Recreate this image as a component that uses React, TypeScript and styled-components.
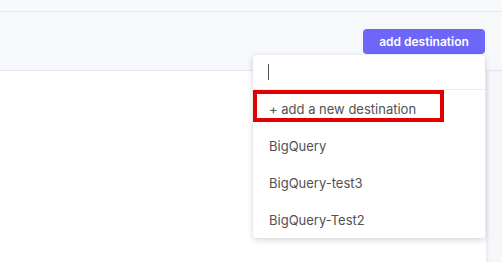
import styled, { createGlobalStyle } from "styled-components";

const GlobalStyle = createGlobalStyle`
  html, body {
    margin: 0;
    padding: 0;
    background: #f7f8fc;
    font-family: Inter, "Noto Sans", sans-serif;
  }
`;

const Page = styled.div`
  width: 502px;
  height: 262px;
  overflow: hidden;
  display: flex;
  flex-direction: column;
`;

const TopBar = styled.div`
  height: 11px;
  flex: none;
  border-bottom: 1px solid #e7e8ee;
`;

const Header = styled.div`
  height: 59px;
  flex: none;
  display: flex;
  justify-content: flex-end;
  align-items: flex-start;
  padding: 17px 17px 0 0;
  box-sizing: border-box;
  border-bottom: 1px solid #e6e7ee;
  position: relative;
  z-index: 2;
`;

const ButtonWrap = styled.div`
  position: relative;
`;

const AddButton = styled.button`
  height: 25px;
  width: 122px;
  padding: 0;
  border: none;
  border-radius: 4px;
  background: #6e66f9;
  color: #fff;
  font-family: Inter, sans-serif;
  font-size: 12px;
  font-weight: 600;
  cursor: pointer;
`;

const Dropdown = styled.div`
  position: absolute;
  top: 26px;
  right: 0;
  width: 232px;
  background: #fff;
  border-radius: 3px;
  box-shadow: 0 2px 6px rgba(0, 0, 0, 0.16), 0 0 1px rgba(0, 0, 0, 0.12);
`;

const SearchRow = styled.div`
  height: 35px;
  box-sizing: border-box;
  border-bottom: 1px solid #ececef;
  display: flex;
  align-items: center;
  padding-left: 15px;
`;

const Caret = styled.span`
  width: 1px;
  height: 16px;
  background: #555;
`;

const Option = styled.div<{ $marked?: boolean }>`
  position: relative;
  height: 37px;
  display: flex;
  align-items: center;
  padding-left: 16px;
  font-size: 13px;
  color: #515151;

  ${(p) =>
    p.$marked &&
    `
    &::after {
      content: "";
      position: absolute;
      top: 0;
      left: 0;
      width: 191px;
      height: 32px;
      box-sizing: border-box;
      border: 4px solid #e00000;
    }
  `}
`;

const Body = styled.div`
  flex: 1;
  display: flex;
`;

const Panel = styled.div`
  width: 486px;
  background: #fff;
`;

const SideStrip = styled.div`
  flex: 1;
  background: #f6f7fb;
  box-shadow: inset 2px 0 3px rgba(0, 0, 0, 0.05);
`;

const destinations = ["BigQuery", "BigQuery-test3", "BigQuery-Test2"];

function App() {
  return (
    <>
      <GlobalStyle />
      <Page>
        <TopBar />
        <Header>
          <ButtonWrap>
            <AddButton>add destination</AddButton>
            <Dropdown>
              <SearchRow>
                <Caret />
              </SearchRow>
              <Option $marked>+ add a new destination</Option>
              {destinations.map((d) => (
                <Option key={d}>{d}</Option>
              ))}
            </Dropdown>
          </ButtonWrap>
        </Header>
        <Body>
          <Panel />
          <SideStrip />
        </Body>
      </Page>
    </>
  );
}

export default App;
